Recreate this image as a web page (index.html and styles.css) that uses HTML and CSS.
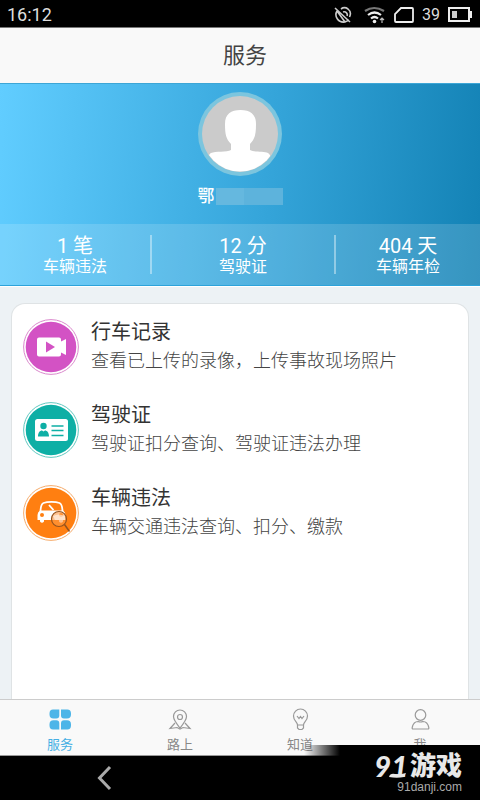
FILE: index.html
```html
<!DOCTYPE html>
<html lang="zh-CN">
<head>
<meta charset="utf-8">
<meta name="viewport" content="width=device-width, initial-scale=1">
<title>服务</title>
<link rel="stylesheet" href="styles.css">
</head>
<body>
<div class="screen">
  <div class="status">
    <span class="clock">16:12</span>
    <div class="status-icons">
      <svg width="18" height="18" viewBox="0 0 18 18" fill="none" stroke="#ccc" stroke-width="1.6">
        <path d="M1 2l15 14M3 5c-3 5 1 12 8 11l4-2M3 5l8 11M7 3c2-1.500 5-1.500 7 0 2.500 2 3 5 1.500 8M9 6c3-1 5 2 4 4"/>
      </svg>
      <svg width="22" height="18" viewBox="0 0 22 18" fill="none" stroke-width="2.200">
        <path d="M1 5Q10-1 20 5" stroke="#777"/><path d="M4 9q6.500-5 13 0" stroke="#eee"/><path d="M7 12.500q3.500-3 7 0" stroke="#eee"/><circle cx="10.500" cy="15.500" r="1.800" fill="#eee"/><path d="M18 17v-5m-2 2l2-2 2 2" stroke="#bbb" stroke-width="1.200"/>
      </svg>
      <svg width="20" height="16" viewBox="0 0 20 16" fill="none" stroke="#eee" stroke-width="1.800"><path d="M7 1h11q1 0 1 1v12q0 1-1 1H2q-1 0-1-1V7z"/></svg>
      <span class="level">39</span>
      <svg width="25" height="15" viewBox="0 0 25 15"><rect x="1" y="1" width="20" height="13" fill="none" stroke="#eee" stroke-width="2"/><path d="M22 4h2v7h-2z" fill="#eee"/><path d="M4 4h5v7H4z" fill="#ccc"/></svg>
    </div>
  </div>
  <header class="title"><h1>服务</h1></header>
  <section class="hero">
    <div class="profile">
      <svg class="avatar" width="84" height="84" viewBox="0 0 84 84">
        <defs><clipPath id="face"><circle cx="42" cy="42" r="37.500"/></clipPath></defs>
        <circle cx="42" cy="42" r="42" fill="#7cc5de"/><circle cx="42" cy="42" r="38" fill="#cbcbcb"/>
        <path clip-path="url(#face)" fill="#fff" d="M27 32C27 22 33 18 42.500 18S58 22 58 32c0 10-1 15-6 20v6c4 2.500 14 1 18 3 3 2 3 4 3 23H10c0-19 0-21 3-23 4-2 16-.5 20-3v-6c-5-5-6-10-6-20z"/>
      </svg>
      <div class="name"><span>鄂</span><i class="mask"></i></div>
    </div>
    <div class="stats">
      <div class="stat"><b>1 笔</b><span>车辆违法</span></div>
      <div class="stat"><b>12 分</b><span>驾驶证</span></div>
      <div class="stat"><b>404 天</b><span>车辆年检</span></div>
    </div>
  </section>
  <main class="content">
    <div class="card">
      <a class="item" href="#record">
        <svg width="56" height="56" viewBox="0 0 56 56">
          <circle cx="28" cy="28" r="27.400" fill="#fff" stroke="#db8acd"/><circle cx="28" cy="28" r="25.300" fill="#d352c4"/>
          <path fill="#fff" d="M16 18.500h20q2 0 2 2v2l5-2.500v16l-5-2.500v2q0 2-2 2H16q-2 0-2-2v-15q0-2 2-2z"/><path fill="#d352c4" d="M23 22.500l9 5.500-9 5.500z"/>
        </svg>
        <div class="text"><h2>行车记录</h2><p>查看已上传的录像，上传事故现场照片</p></div>
      </a>
      <a class="item" href="#license">
        <svg width="56" height="56" viewBox="0 0 56 56">
          <circle cx="28" cy="28" r="27.400" fill="#fff" stroke="#62c9c1"/><circle cx="28" cy="28" r="25.300" fill="#0eafa5"/>
          <rect x="12" y="17" width="33" height="22" rx="2.500" fill="#fff"/>
          <g fill="#0eafa5"><circle cx="20.500" cy="24" r="3.200"/><path d="M15 34.500c0-4 2-6 4-6l1.500 1 1.500-1c2 0 4 2 4 6z"/></g><path d="M28.500 24h12m-12 4.500h12m-12 5h12" stroke="#0eafa5" stroke-width="1.500"/>
        </svg>
        <div class="text"><h2>驾驶证</h2><p>驾驶证扣分查询、驾驶证违法办理</p></div>
      </a>
      <a class="item" href="#violation">
        <svg width="56" height="56" viewBox="0 0 56 56">
          <circle cx="28" cy="28" r="27.400" fill="#fff" stroke="#f6ac6c"/><circle cx="28" cy="28" r="25.300" fill="#ff7f11"/>
          <path d="M17.500 27c0-4 1-8 3-9 4-1.500 12-1.500 16 0 2 1 3 5 3 9M26 20l4.500 5" fill="none" stroke="#fff" stroke-width="1.800"/>
          <path fill="#fff" d="M17 25.500h23q2.500 1.500 2.500 4.500v5H40v1.500q-2 2.500-4 0V35H21v1.500q-2 2.500-4 0V35h-2.500v-5q0-3 2.500-4.500z"/>
          <circle cx="19" cy="30" r="2" fill="#ff7f11"/><circle cx="38" cy="30" r="2" fill="#ff7f11"/>
          <circle cx="36" cy="34" r="7.500" fill="#ff9a45" fill-opacity=".6" stroke="#94531f" stroke-width="1.200"/><path d="M41.500 39.500l5 7" stroke="#94531f" stroke-width="1.500"/>
          <path d="M30 31q6-3 12 0v4H32z" fill="#fff" fill-opacity=".55"/>
        </svg>
        <div class="text"><h2>车辆违法</h2><p>车辆交通违法查询、扣分、缴款</p></div>
      </a>
    </div>
  </main>
  <nav class="tabs">
    <a class="tab active" href="#service">
      <svg width="24" height="24" viewBox="0 0 24 24" fill="#4db5e8"><path d="M5 1.500h6.300v6q0 3-3 3H5.500q-4 0-4-4V5.500q0-4 3.500-4zM13 1.500h6.300q3.700 0 3.700 4v1q0 4-4 4h-3q-3 0-3-3zM5.500 12.200h2.800q3 0 3 3v6.300H5q-3.500 0-3.500-4v-1.300q0-4 4-4zM16 12.200h3q4 0 4 4v1.300q0 4-3.700 4H13v-6.300q0-3 3-3z"/></svg>
      <span>服务</span></a>
    <a class="tab" href="#road">
      <svg width="24" height="24" viewBox="0 0 24 24" fill="none" stroke="#999" stroke-width="1.200"><path d="M12 20C8 15 5.500 12 5.500 8.500a6.500 6.500 0 0 1 13 0C18.500 12 16 15 12 20z"/><circle cx="12" cy="9" r="2.500"/><path d="M7 15l-5 5.500 7-1 3 1.500 3-1.500 7 1-5-5.500"/></svg>
      <span>路上</span></a>
    <a class="tab" href="#know">
      <svg width="24" height="24" viewBox="0 0 24 24" fill="none" stroke="#999" stroke-width="1.200"><path d="M9.500 17c0-3-4-4-4-9a7 7 0 0 1 14 0c0 5-4 6-4 9zM9.500 17v3l1.500 1.500h3l1.500-1.500v-3M9 8l2 2.500 1.500-2 1.500 2L16 8"/></svg>
      <span>知道</span></a>
    <a class="tab" href="#me">
      <svg width="24" height="24" viewBox="0 0 24 24" fill="none" stroke="#999" stroke-width="1.200"><circle cx="12.500" cy="7" r="5.300"/><path d="M5 21q-1 0-.8-1.500C5 16 7 13.500 10 13.500q2.500 1 5 0c3 0 5 2.500 5.800 6Q21 21 20 21z"/></svg>
      <span>我</span></a>
  </nav>
  <footer class="keys">
    <button class="back" type="button" aria-label="返回"><svg width="16" height="26" viewBox="0 0 16 26" fill="none" stroke="#aaa" stroke-width="3"><path d="M14 2L3.500 13 14 24"/></svg></button>
    <div class="brand">
      <div class="logo"><span class="digits">91</span><svg class="swash" width="17" height="6" viewBox="0 0 17 6"><path d="M0 5q1-4 6-3 4 1 11-1l-2 4q-7 1.500-15 0z" fill="#e8e8e8"/></svg><span class="word">游戏</span></div>
      <span class="site">91danji.com</span>
    </div>
  </footer>
</div>
</body>
</html>
```
FILE: styles.css
```css
* { box-sizing: border-box; }

body {
  margin: 0;
  font-family: Roboto, "Noto Sans CJK SC", sans-serif;
  background: #edf2f5;
}

h1, h2, p { margin: 0; font-weight: 400; }
a { color: inherit; text-decoration: none; }
svg { display: block; flex: none; }

.screen {
  display: flex;
  flex-direction: column;
  min-height: 100vh;
}

.status {
  display: flex;
  align-items: center;
  justify-content: space-between;
  height: 28px;
  padding: 2px 7px 0;
  color: #ddd;
  background: #000;
  border-bottom: 1px solid #777;
}

.clock { font-size: 18px; line-height: 24px; }
.status-icons { display: flex; align-items: center; gap: 8px; }
.status-icons svg:first-child { margin-right: 4px; }
.level { font-size: 16px; }

.title {
  height: 55px;
  padding-left: 10px;
  background: #f9f9f9;
  text-align: center;
}
.title h1 { font-size: 22px; line-height: 56px; color: #444; }

.hero {
  background: linear-gradient(95deg, #61cdff 0%, #35a5da 55%, #1382b5 100%);
  border-top: 1px solid #3da6d6;
  border-bottom: 1px solid #2da3da;
}

.profile {
  display: flex;
  flex-direction: column;
  align-items: center;
  gap: 8px;
  padding: 8px 0 15px;
}

.name {
  display: flex;
  align-items: center;
  gap: 1px;
  font-size: 17px;
  font-weight: 500;
  line-height: 25px;
  color: #fff;
}
.mask {
  width: 67px;
  height: 17px;
  background: linear-gradient(90deg, #65b8df 42%, #5db3dc 42%);
}

.stats {
  display: grid;
  grid-template-columns: 150fr 184fr 146fr;
  padding: 11px 0;
  background: rgba(255, 255, 255, .15);
}
.stat {
  display: flex;
  flex-direction: column;
  height: 39px;
  align-items: center;
  color: #fff;
}
.stat + .stat { border-left: 2px solid rgba(255, 255, 255, .4); }
.stat b { font-size: 20px; font-weight: 400; line-height: 22px; }
.stat span { font-size: 16px; line-height: 20px; }

.content {
  display: flex;
  flex: 1;
  padding: 16px 11px 0;
  border-top: 1px solid #fff;
}
.card {
  flex: 1;
  padding: 15px 11px 0;
  background: #fff;
  border: 1px solid #dfe3e5;
  border-bottom: 0;
  border-radius: 14px 14px 0 0;
}
.item {
  display: flex;
  gap: 12px;
  height: 83px;
}
.text h2 { font-size: 20px; line-height: 26px; color: #333; }
.text p {
  margin-top: 3px;
  font-size: 18px;
  font-weight: 300;
  line-height: 26px;
  color: #444;
}

.tabs {
  display: grid;
  grid-template-columns: repeat(4, 1fr);
  height: 57px;
  padding-top: 8px;
  background: #f9f9f9;
  border-top: 1px solid #ccc;
  border-bottom: 1px solid #999;
}
.tab {
  display: flex;
  flex-direction: column;
  align-items: center;
  gap: 3px;
  font-size: 13px;
  line-height: 20px;
  color: #888;
}
.active { color: #45afe4; }

.keys {
  position: relative;
  height: 44px;
  background: #000;
}
.back {
  display: block;
  margin: 0 0 0 96px;
  padding: 9px 0;
  border: 0;
  background: none;
}
.brand {
  position: absolute;
  right: 0;
  bottom: 0;
  width: 176px;
  height: 55px;
  padding: 8px 18px 0 0;
  background: linear-gradient(90deg, transparent 0, #000 36px);
  color: #e8e8e8;
  display: flex;
  flex-direction: column;
  align-items: flex-end;
}
.logo {
  position: relative;
  display: flex;
  align-items: center;
  gap: 2px;
  height: 26px;
  font-weight: 900;
}
.digits { font-family: Lato, sans-serif; font-size: 29px; line-height: 26px; font-style: italic; }
.swash { position: absolute; left: 15px; bottom: 1px; }
.word { font-size: 26px; line-height: 26px; }
.site { font-family: "Liberation Sans", sans-serif; font-size: 12px; line-height: 16px; color: #aaa; }
```
